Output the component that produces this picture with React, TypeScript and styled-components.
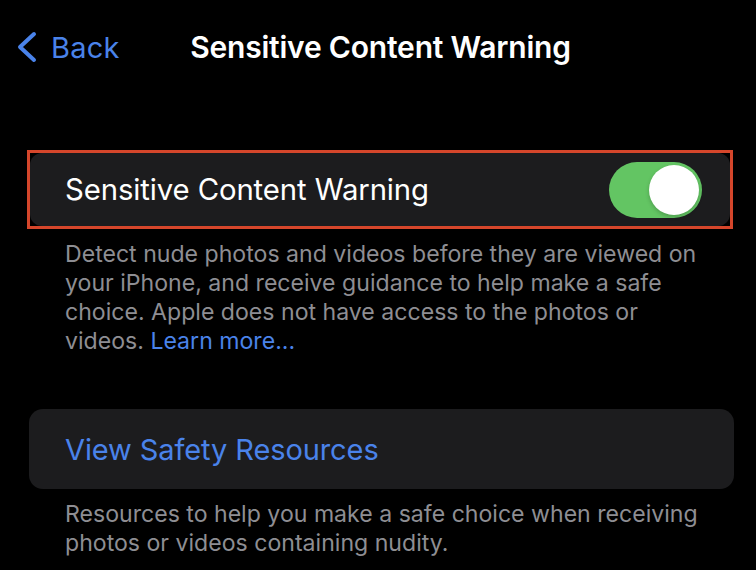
import React from "react";
import styled, { createGlobalStyle } from "styled-components";

const Global = createGlobalStyle`
  html, body { margin: 0; padding: 0; background: #000; }
  body { font-family: Inter, "Noto Sans", "Liberation Sans", sans-serif; -webkit-font-smoothing: antialiased; }
`;

const Screen = styled.div`
  width: 756px;
  height: 570px;
  overflow: hidden;
  background: #000;
  color: #fff;
  display: flex;
  flex-direction: column;
`;

const NavBar = styled.div`
  height: 94px;
  display: grid;
  grid-template-columns: 1fr auto 1fr;
  align-items: center;
  padding: 0 16px;
  box-sizing: border-box;
`;

const BackButton = styled.div`
  display: flex;
  align-items: center;
  gap: 13px;
  color: #4a83ea;
  font-size: 29px;
  letter-spacing: 0.2px;
`;

const Title = styled.div`
  font-size: 30px;
  font-weight: 600;
  letter-spacing: -0.2px;
  padding-left: 5px;
`;

const Highlight = styled.div`
  margin: 56px 23px 0 27px;
  border: 3px solid #d5462b;
  box-sizing: border-box;
  height: 79px;
  display: flex;
`;

const Card = styled.div<{ $radius?: number }>`
  flex: 1;
  background: #1c1c1e;
  border-radius: ${(p) => p.$radius ?? 12}px;
  display: flex;
  align-items: center;
  justify-content: space-between;
  padding: 0 28px 0 35px;
`;

const LinkCard = styled(Card)`
  margin: 53px 22px 0 29px;
  height: 80px;
  flex: none;
  padding-left: 36px;
`;

const RowLabel = styled.div<{ $link?: boolean }>`
  font-size: ${(p) => (p.$link ? 29 : 29.3)}px;
  color: ${(p) => (p.$link ? "#4a83ea" : "#fff")};
  letter-spacing: -0.1px;
`;

const Track = styled.div<{ $on: boolean }>`
  width: 93px;
  height: 56px;
  border-radius: 28px;
  background: ${(p) => (p.$on ? "#63c563" : "#39393d")};
  display: flex;
  align-items: center;
  justify-content: ${(p) => (p.$on ? "flex-end" : "flex-start")};
  padding: 0 3px;
  box-sizing: border-box;
`;

const Knob = styled.div`
  width: 50px;
  height: 50px;
  border-radius: 50%;
  background: #fff;
  box-shadow: 0 2px 4px rgba(0, 0, 0, 0.2);
`;

const Footer = styled.p`
  margin: 11px 50px 0 65px;
  font-size: 23.1px;
  line-height: 29px;
  color: #8e8e93;
  letter-spacing: 0;
`;

const Link = styled.span`
  color: #4a83ea;
`;

const Chevron = () => (
  <svg width="22" height="32" viewBox="0 0 22 32" fill="none">
    <path d="M18 3 L4 16 L18 29" stroke="#4a83ea" strokeWidth="4" strokeLinecap="round" strokeLinejoin="round" />
  </svg>
);

export default function App() {
  return (
    <Screen>
      <Global />
      <NavBar>
        <BackButton>
          <Chevron />
          <span>Back</span>
        </BackButton>
        <Title>Sensitive Content Warning</Title>
        <div />
      </NavBar>
      <Highlight>
        <Card>
          <RowLabel>Sensitive Content Warning</RowLabel>
          <Track $on>
            <Knob />
          </Track>
        </Card>
      </Highlight>
      <Footer>
        Detect nude photos and videos before they are viewed on your iPhone, and receive guidance to help make a safe
        choice. Apple does not have access to the photos or videos. <Link>Learn more...</Link>
      </Footer>
      <LinkCard $radius={14}>
        <RowLabel $link>View Safety Resources</RowLabel>
      </LinkCard>
      <Footer>Resources to help you make a safe choice when receiving photos or videos containing nudity.</Footer>
    </Screen>
  );
}
